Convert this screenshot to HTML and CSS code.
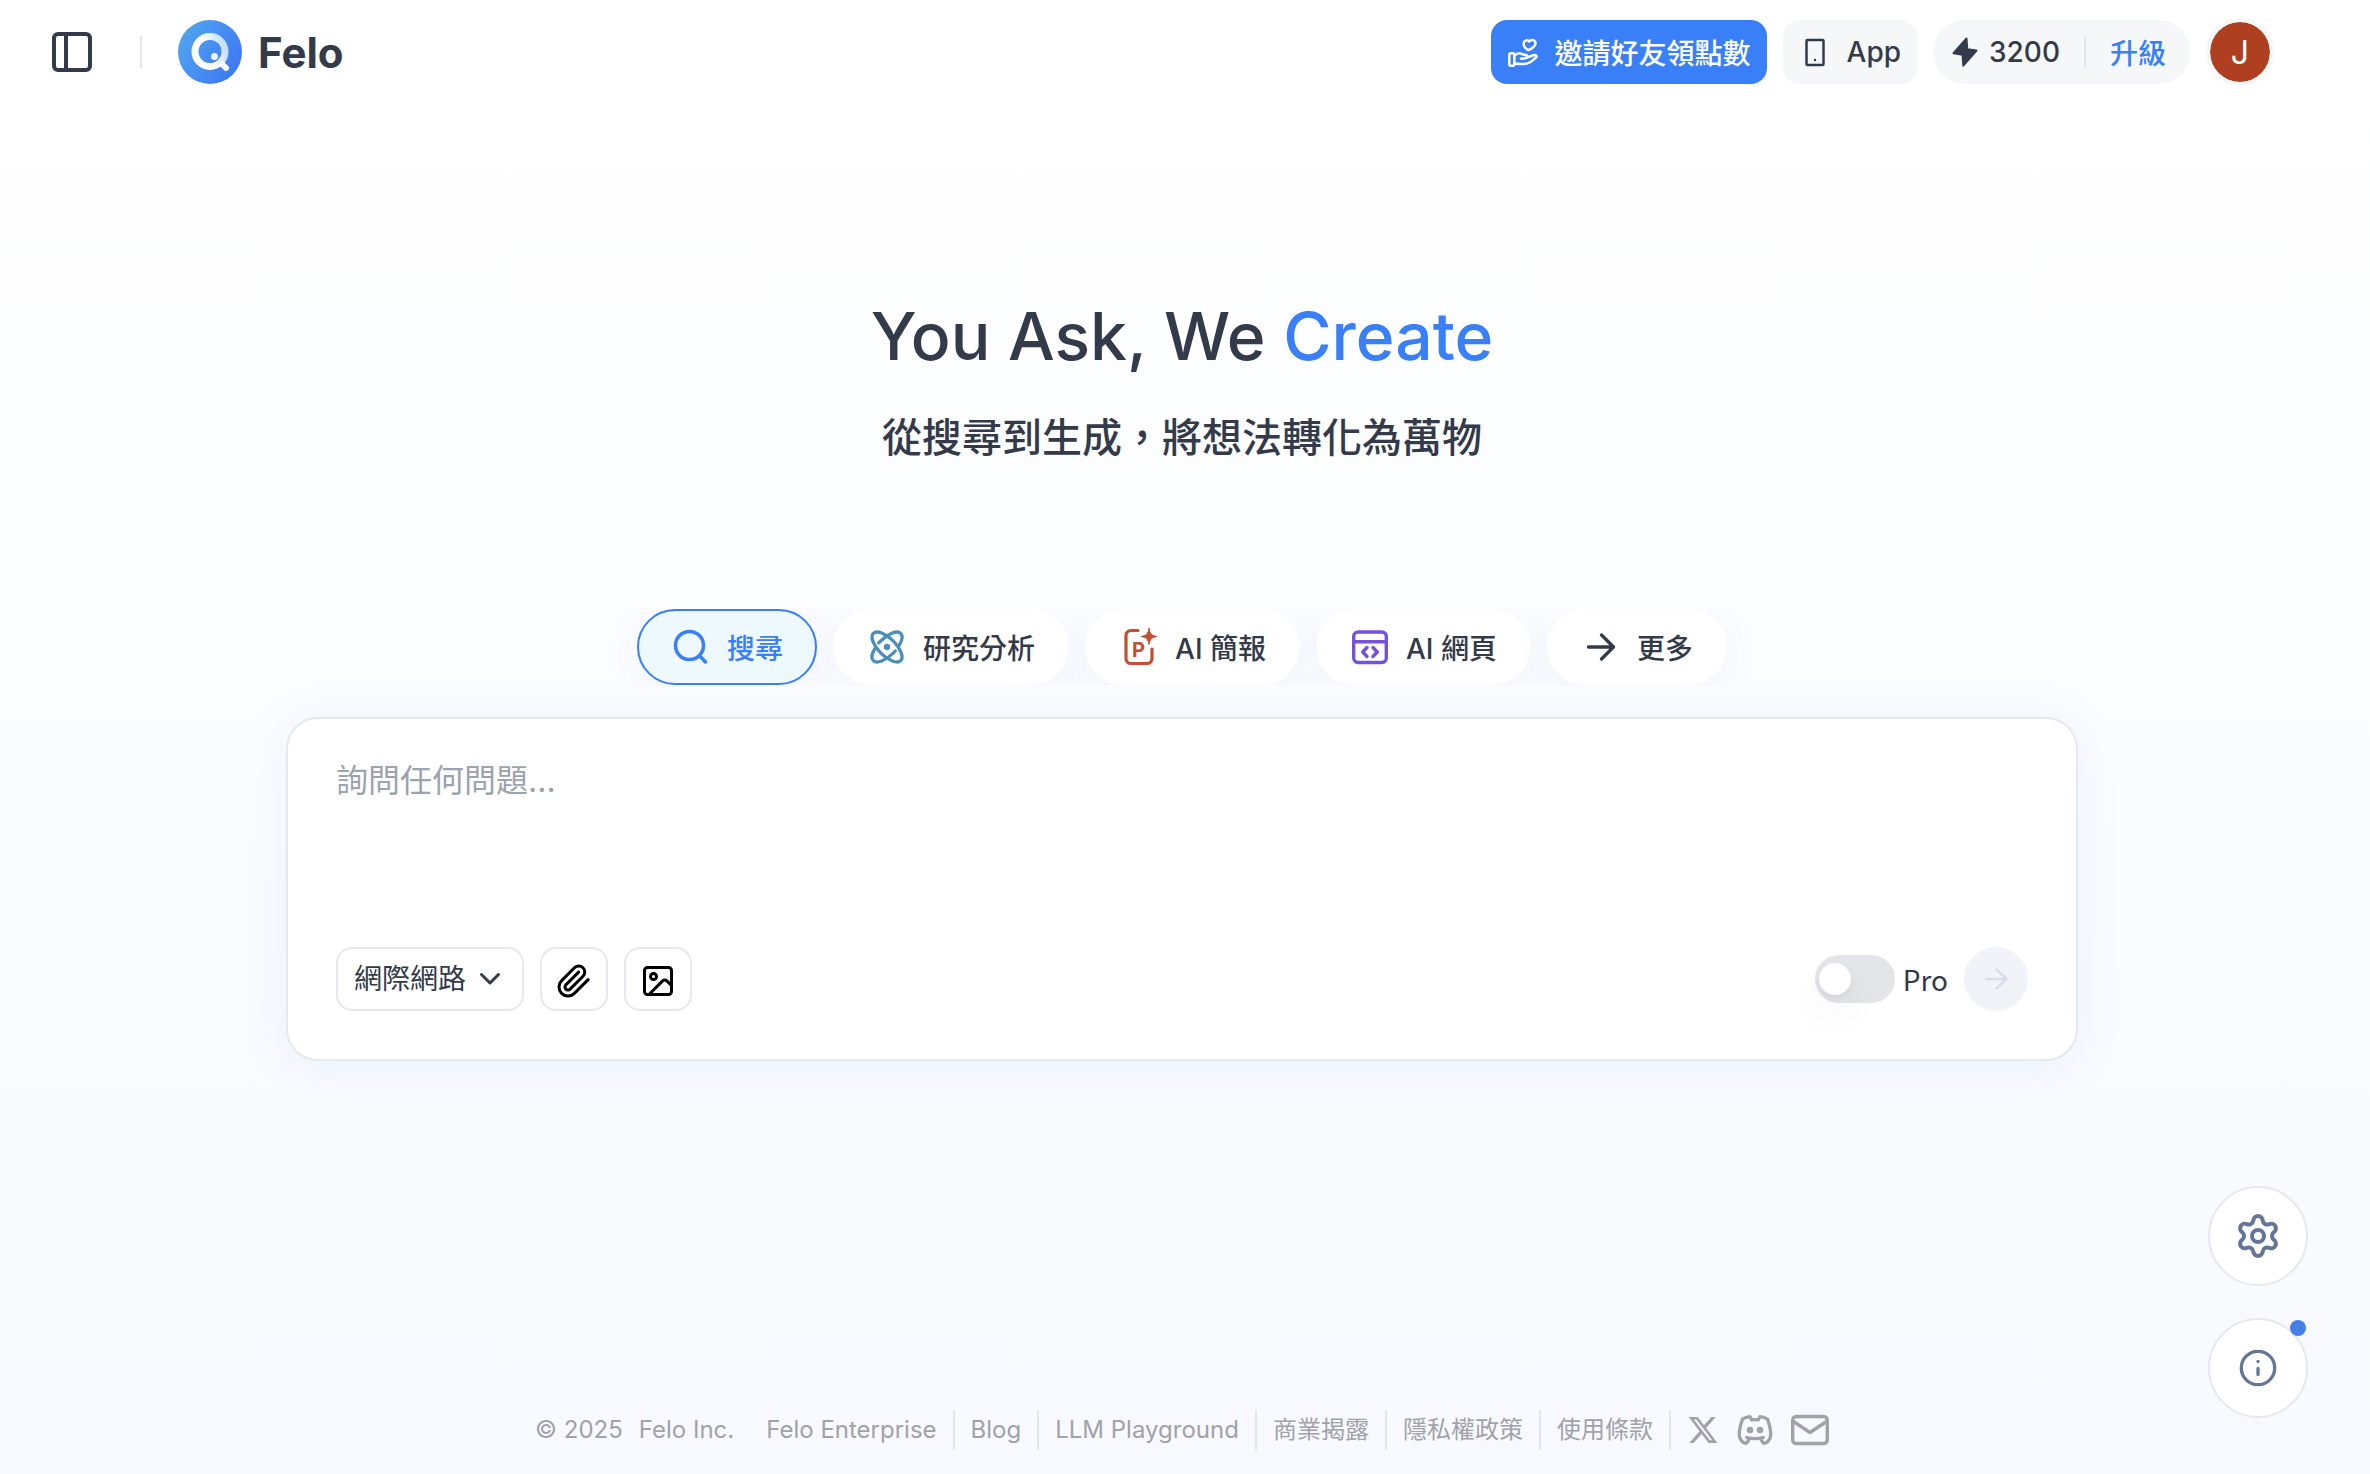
FILE: index.html
```
<!DOCTYPE html>
<html lang="zh-Hant">
<head>
    <meta charset="UTF-8">
    <meta name="viewport" content="width=device-width, initial-scale=1.0">
    <title>Felo</title>
    <link rel="stylesheet" href="styles.css">
</head>
<body>
    <header class="header">
        <button class="plain-btn" type="button" aria-label="Sidebar">
            <svg width="40" height="40" viewBox="0 0 40 40" fill="none" stroke="currentColor" stroke-width="4">
                <rect x="2" y="2" width="36" height="36" rx="4"/>
                <path d="M14 2v36"/>
            </svg>
        </button>
        <span class="divider"></span>
        <a class="logo" href="#">
            <svg width="64" height="64" viewBox="0 0 64 64" fill="none">
                <defs>
                    <linearGradient id="logo-bg" x1="0" y1="0.2" x2="1" y2="0.8">
                        <stop offset="0" stop-color="#50a6f0"/>
                        <stop offset="1" stop-color="#3c76f4"/>
                    </linearGradient>
                    <linearGradient id="logo-ring" x1="0.4" y1="0.5" x2="0.95" y2="0.3">
                        <stop offset="0" stop-color="#fff"/>
                        <stop offset="1" stop-color="#c9e0fd"/>
                    </linearGradient>
                </defs>
                <circle cx="32" cy="32" r="32" fill="url(#logo-bg)"/>
                <circle cx="32" cy="31.5" r="15" stroke="url(#logo-ring)" stroke-width="7"/>
                <path d="M44 44l4 4" stroke="#fff" stroke-width="6" stroke-linecap="round"/>
                <circle cx="36.5" cy="36.5" r="3.5" fill="#eef5ff"/>
            </svg>
            <span>Felo</span>
        </a>
        <nav class="actions">
            <button class="btn btn-primary" type="button">
                <svg width="32" height="32" viewBox="0 0 32 32" fill="none" stroke="currentColor" stroke-width="2.5" stroke-linecap="round" stroke-linejoin="round">
                    <rect x="2.3" y="17.3" width="5" height="12.4" rx="1.5"/>
                    <path d="M7.5 19.5c2.5-2.2 5-2.8 7-1.6 1.2.7 2.2.8 3.6.8 2.6 0 2.6 3.3 0 3.5L14 22.7M19.8 21.5l6.5-2.3c2.6-.9 4.2 1 2.5 2.6-2.6 2.3-4.8 4.6-8.3 5.6-3.5.9-8.5.8-13 .2"/>
                    <path d="M21.3 14.2c-3-1.8-5-4.6-4.5-7.3.5-2.6 3.6-3.6 5.4-1.3 1.5-2.4 5-2.2 6.1.4 1.2 3.2-2.6 6.6-7 8.2z"/>
                </svg>
                <span>邀請好友領點數</span>
            </button>
            <button class="btn" type="button">
                <svg width="32" height="32" viewBox="0 0 32 32" fill="none" stroke="currentColor" stroke-width="2.5">
                    <rect x="7.5" y="4" width="17" height="25" rx="1"/>
                    <circle cx="16" cy="24" r="1.2" fill="currentColor" stroke="none"/>
                </svg>
                <span>App</span>
            </button>
            <div class="credits">
                <svg width="32" height="32" viewBox="-3 -1 32 32" fill="currentColor" stroke="currentColor" stroke-width="2" stroke-linejoin="round">
                    <path d="M14.5 1.5L1.5 16.2l9 1.5.8 11L24.5 13.5l-9.2-1.3z"/>
                </svg>
                <span>3200</span>
                <span class="divider"></span>
                <a href="#">升級</a>
            </div>
            <button class="avatar" type="button">J</button>
        </nav>
    </header>

    <main class="main">
        <h1>You Ask, We <span>Create</span></h1>
        <h2>從搜尋到生成，將想法轉化為萬物</h2>

        <div class="tabs">
            <button class="tab active" type="button">
                <svg width="40" height="40" viewBox="0 0 40 40" fill="none" stroke="currentColor" stroke-width="3.5" stroke-linecap="round">
                    <circle cx="18.5" cy="18.5" r="14"/>
                    <path d="M28.8 29l5.7 6"/>
                </svg>
                <span>搜尋</span>
            </button>
            <button class="tab" type="button">
                <svg class="icon-research" width="40" height="40" viewBox="0 0 24 24" fill="none" stroke="currentColor" stroke-width="2" stroke-linecap="round">
                    <path d="M20.2 20.2c2.04-2.03.02-7.36-4.5-11.9-4.54-4.52-9.87-6.54-11.9-4.5-2.04 2.03-.02 7.36 4.5 11.9 4.54 4.52 9.87 6.54 11.9 4.5z"/>
                    <path d="M7 9.6C7.4 9.1 7.8 8.7 8.3 8.3 12.84 3.78 18.17 1.76 20.2 3.8 21.6 5.2 21.1 8.2 19 11.5"/>
                    <path d="M17 14.4C16.6 14.9 16.2 15.3 15.7 15.7 11.16 20.22 5.83 22.24 3.8 20.2 2.4 18.8 2.9 15.8 5 12.5"/>
                    <circle cx="12" cy="12" r="1.9" fill="currentColor" stroke="none"/>
                </svg>
                <span>研究分析</span>
            </button>
            <button class="tab" type="button">
                <svg class="icon-slides" width="40" height="40" viewBox="0 0 40 40" fill="none" stroke="currentColor" stroke-width="3.2" stroke-linecap="round">
                    <path d="M19 3.5h-7a5 5 0 0 0-5 5v23a5 5 0 0 0 5 5h16a5 5 0 0 0 5-5V22"/>
                    <path d="M30 1.5c1 5.5 2.5 7 8 8-5.5 1-7 2.5-8 8-1-5.5-2.5-7-8-8 5.5-1 7-2.5 8-8z" fill="currentColor" stroke-width="1" stroke-linejoin="round"/>
                    <text class="icon-letter" x="13" y="30">P</text>
                </svg>
                <span>AI 簡報</span>
            </button>
            <button class="tab" type="button">
                <svg class="icon-web" width="40" height="40" viewBox="0 0 40 40" fill="none" stroke="currentColor" stroke-width="3.4" stroke-linecap="round" stroke-linejoin="round">
                    <rect x="3.7" y="5" width="32.6" height="30.5" rx="4.5"/>
                    <path d="M4 14.8h32M17 20.5L12.7 25l4.3 4.5M23 20.5l4.3 4.5-4.3 4.5"/>
                </svg>
                <span>AI 網頁</span>
            </button>
            <button class="tab" type="button">
                <svg width="40" height="40" viewBox="0 0 40 40" fill="none" stroke="currentColor" stroke-width="3.4" stroke-linecap="round" stroke-linejoin="round">
                    <path d="M7.5 20h25M20.5 8l12 12-12 12"/>
                </svg>
                <span>更多</span>
            </button>
        </div>

        <form class="search-box">
            <textarea placeholder="詢問任何問題..." aria-label="詢問任何問題"></textarea>
            <div class="toolbar">
                <div class="source">
                    <select aria-label="來源">
                        <option>網際網路</option>
                    </select>
                    <svg width="32" height="32" viewBox="0 0 32 32" fill="none" stroke="currentColor" stroke-width="3" stroke-linecap="round" stroke-linejoin="round">
                        <path d="M7.5 11.5l8.5 8.5 8.5-8.5"/>
                    </svg>
                </div>
                <button class="tool-btn" type="button" aria-label="Attach file">
                    <svg width="36" height="36" viewBox="0 0 24 24" fill="none" stroke="currentColor" stroke-width="2" stroke-linecap="round" stroke-linejoin="round">
                        <path d="M21.44 11.05l-9.19 9.19a6 6 0 0 1-8.49-8.49l8.57-8.57A4 4 0 1 1 18 8.84l-8.59 8.57a2 2 0 0 1-2.83-2.83l8.49-8.48"/>
                    </svg>
                </button>
                <button class="tool-btn" type="button" aria-label="Add image">
                    <svg width="36" height="36" viewBox="0 0 24 24" fill="none" stroke="currentColor" stroke-width="2" stroke-linecap="round" stroke-linejoin="round">
                        <rect x="3" y="3" width="18" height="18" rx="2"/>
                        <circle cx="9" cy="9" r="2"/>
                        <path d="M21 15l-3.086-3.086a2 2 0 0 0-2.828 0L6 21"/>
                    </svg>
                </button>
                <label class="pro">
                    <input type="checkbox">
                    <span>Pro</span>
                </label>
                <button class="send-btn" type="button" aria-label="Send">
                    <svg width="32" height="32" viewBox="0 0 32 32" fill="none" stroke="currentColor" stroke-width="2.5" stroke-linecap="round" stroke-linejoin="round">
                        <path d="M6.5 16h20M16.5 6.5l10 9.5-10 9.5"/>
                    </svg>
                </button>
            </div>
        </form>
    </main>

    <footer class="footer">
        <span class="copyright">© 2025</span>
        <span class="company">Felo Inc.</span>
        <a href="#">Felo Enterprise</a>
        <a href="#">Blog</a>
        <a href="#">LLM Playground</a>
        <a href="#">商業揭露</a>
        <a href="#">隱私權政策</a>
        <a href="#">使用條款</a>
        <div class="social">
            <a href="#" aria-label="X">
                <svg width="32" height="32" viewBox="0 0 24 24" fill="currentColor">
                    <path d="M18.244 2.25h3.308l-7.227 8.26 8.502 11.24H16.17l-5.214-6.817L4.99 21.75H1.68l7.73-8.835L1.254 2.25H8.08l4.713 6.231zm-1.161 17.52h1.833L7.084 4.126H5.117z"/>
                </svg>
            </a>
            <a href="#" aria-label="Discord">
                <svg width="40" height="40" viewBox="0 0 24 24" fill="none" stroke="currentColor" stroke-width="2" stroke-linecap="round" stroke-linejoin="round">
                    <circle cx="9" cy="12" r="1"/>
                    <circle cx="15" cy="12" r="1"/>
                    <path d="M15.5 17c0 1 1.5 3 2 3 1.5 0 2.833-1.667 3.5-3 .667-1.667.5-5.833-1.5-11.5-1.457-1.015-3-1.34-4.5-1.5l-.972 1.923a11.913 11.913 0 0 0-4.053 0L9 4c-1.5.16-3.043.485-4.5 1.5C2.5 11.167 2.333 15.333 3 17c.667 1.333 2 3 3.5 3 .5 0 2-2 2-3"/>
                    <path d="M7 16.5c3.5 1 6.5 1 10 0"/>
                </svg>
            </a>
            <a href="#" aria-label="Mail">
                <svg width="38" height="32" viewBox="0 0 38 32" fill="none" stroke="currentColor" stroke-width="3.4" stroke-linejoin="round">
                    <rect x="1.7" y="2.5" width="34.6" height="27" rx="3.5"/>
                    <path d="M2.5 7.5L19 18.5 35.5 7.5"/>
                </svg>
            </a>
        </div>
    </footer>

    <aside class="floating">
        <button class="float-btn" type="button" aria-label="Settings">
            <svg width="48" height="48" viewBox="0 0 24 24" fill="none" stroke="currentColor" stroke-width="2" stroke-linecap="round" stroke-linejoin="round">
                <path d="M9.671 4.136a2.34 2.34 0 0 1 4.659 0 2.34 2.34 0 0 0 3.319 1.915 2.34 2.34 0 0 1 2.33 4.033 2.34 2.34 0 0 0 0 3.831 2.34 2.34 0 0 1-2.33 4.033 2.34 2.34 0 0 0-3.319 1.915 2.34 2.34 0 0 1-4.659 0 2.34 2.34 0 0 0-3.32-1.915 2.34 2.34 0 0 1-2.33-4.033 2.34 2.34 0 0 0 0-3.831A2.34 2.34 0 0 1 6.35 6.051a2.34 2.34 0 0 0 3.319-1.915"/>
                <circle cx="12" cy="12" r="3"/>
            </svg>
        </button>
        <button class="float-btn" type="button" aria-label="Info">
            <svg width="40" height="40" viewBox="0 0 40 40" fill="none" stroke="currentColor" stroke-width="3.3" stroke-linecap="round">
                <circle cx="20" cy="20" r="16.7"/>
                <path d="M20 20.5v6M20 13.5v.01"/>
            </svg>
            <span class="dot"></span>
        </button>
    </aside>
</body>
</html>
```
FILE: styles.css
```
* {
    box-sizing: border-box;
}
body {
    font-family: Inter, 'Noto Sans CJK TC', sans-serif;
    font-size: 28px;
    color: #333a49;
    background: linear-gradient(to bottom, #ffffff, #f7f9fe);
    margin: 0;
    padding-right: 6px;
    min-height: 100vh;
    display: flex;
    flex-direction: column;
}
button, select, textarea {
    font: inherit;
    color: inherit;
}
button {
    border: none;
    padding: 0;
    background: none;
    cursor: pointer;
}
a {
    color: inherit;
    text-decoration: none;
}
svg {
    display: block;
    flex-shrink: 0;
}

/* header */
.header {
    display: flex;
    align-items: center;
    height: 104px;
    padding: 0 90px 0 52px;
}
.divider {
    width: 2px;
    height: 32px;
    background: #e5e6ee;
}
.header > .divider {
    margin: 0 36px 0 48px;
}
.logo {
    display: flex;
    align-items: center;
    gap: 16px;
    font-size: 42px;
    font-weight: 700;
}
.actions {
    display: flex;
    align-items: center;
    gap: 16px;
    margin-left: auto;
}
.btn {
    display: flex;
    align-items: center;
    gap: 16px;
    height: 64px;
    padding: 0 16px;
    border-radius: 16px;
    background: #f5f7f9;
    font-weight: 500;
    white-space: nowrap;
}
.btn-primary {
    background: #387ff8;
    color: #fff;
}
.credits {
    display: flex;
    align-items: center;
    gap: 8px;
    height: 64px;
    padding: 0 24px 0 16px;
    border-radius: 32px;
    background: #f5f7f9;
    font-weight: 500;
}
.credits .divider {
    margin: 0 16px;
}
.credits a {
    color: #387ff8;
}
.avatar {
    width: 68px;
    height: 68px;
    border: 4px solid #f5f7f9;
    border-radius: 50%;
    background: #ae4021;
    background-clip: padding-box;
    color: #fff;
    font-size: 32px;
}

/* hero */
.main {
    flex: 1;
    display: flex;
    flex-direction: column;
    align-items: center;
    padding: 192px 32px 0;
}
h1 {
    margin: 0;
    font-size: 66px;
    line-height: 80px;
    font-weight: 500;
}
h1 span {
    color: #387ff8;
}
h2 {
    margin: 32px 0 0;
    font-size: 40px;
    line-height: 60px;
    font-weight: 500;
}
.tabs {
    display: flex;
    justify-content: center;
    gap: 16px;
    margin-top: 141px;
    padding: 0 40px;
    overflow: hidden;
}
.tab {
    display: flex;
    align-items: center;
    gap: 16px;
    height: 76px;
    padding: 0 32px;
    border: 2px solid #fff;
    border-radius: 38px;
    background: #fff;
    box-shadow: 0 8px 40px rgba(80, 110, 200, 0.06);
    font-weight: 500;
    white-space: nowrap;
}
.tab.active {
    border-color: #387ff8;
    background: #eef9fe;
    color: #387ff8;
}
.icon-research {
    color: #4a8fba;
}
.icon-slides {
    color: #c24f31;
}
.icon-web {
    color: #7452d9;
}
.icon-letter {
    font-size: 20px;
    font-weight: 700;
    fill: currentColor;
    stroke: none;
}

/* search box */
.search-box {
    width: 100%;
    max-width: 1792px;
    margin-top: 32px;
    padding: 38px 48px 48px;
    border: 2px solid #e6e8ef;
    border-radius: 32px;
    background: #fff;
    box-shadow: 0 4px 48px rgba(56, 127, 248, 0.08);
}
textarea {
    display: block;
    width: 100%;
    height: 190px;
    padding: 0;
    border: none;
    outline: none;
    resize: none;
    background: none;
    font-size: 32px;
    line-height: 48px;
}
textarea::placeholder {
    color: #9ca3af;
}
.toolbar {
    display: flex;
    align-items: center;
    gap: 16px;
}
.source {
    position: relative;
}
.source select {
    display: block;
    height: 64px;
    padding: 0 55px 0 16px;
    border: 2px solid #e6e8ef;
    border-radius: 16px;
    background: #fff;
    appearance: none;
}
.source svg {
    position: absolute;
    right: 18px;
    top: 16px;
    pointer-events: none;
}
.tool-btn {
    display: flex;
    align-items: center;
    justify-content: center;
    width: 68px;
    height: 64px;
    padding-top: 4px;
    border: 2px solid #e6e8ef;
    border-radius: 16px;
    color: #000;
}
.pro {
    display: flex;
    align-items: center;
    gap: 8px;
    margin-left: auto;
    font-family: 'Noto Sans CJK TC', sans-serif;
}
.pro input {
    appearance: none;
    width: 80px;
    height: 48px;
    margin: 0;
    padding: 8px 4px;
    border-radius: 24px;
    background: #e4e5e9;
}
.pro input::before {
    content: '';
    display: block;
    width: 32px;
    height: 32px;
    border-radius: 50%;
    background: #fff;
    box-shadow: 0 4px 8px rgba(0, 0, 0, 0.06), 0 20px 40px rgba(0, 0, 0, 0.06);
}
.pro input:checked {
    padding-left: 44px;
    background: #387ff8;
}
.send-btn {
    display: flex;
    align-items: center;
    justify-content: center;
    width: 64px;
    height: 64px;
    border-radius: 50%;
    background: #f2f3f8;
    color: #d8dde6;
}

/* footer */
.footer {
    display: flex;
    align-items: center;
    justify-content: center;
    height: 40px;
    margin-bottom: 24px;
    font-size: 24px;
    line-height: 40px;
    color: #a1a1aa;
    white-space: nowrap;
}
.copyright {
    margin-right: 16px;
}
.company {
    margin-right: 16px;
}
.footer > a {
    padding: 0 16px;
    border-right: 2px solid #e4e4ea;
}
.social {
    display: flex;
    align-items: center;
    gap: 16px;
    margin-left: 16px;
}

/* floating buttons */
.floating {
    position: fixed;
    right: 62px;
    bottom: 56px;
    display: flex;
    flex-direction: column;
    gap: 32px;
}
.float-btn {
    position: relative;
    display: flex;
    align-items: center;
    justify-content: center;
    width: 100px;
    height: 100px;
    border: 2px solid #e6e8ef;
    border-radius: 50%;
    background: #fff;
    color: #647697;
}
.dot {
    position: absolute;
    top: 0;
    right: 0;
    width: 16px;
    height: 16px;
    border-radius: 50%;
    background: #447fe8;
}
```
